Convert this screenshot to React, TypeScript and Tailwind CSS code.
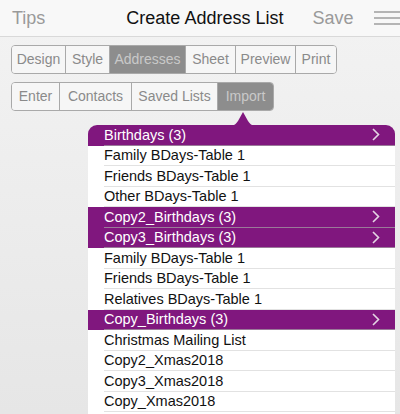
import React from 'react';

const tabsTop: [string, number][] = [
  ['Design', 53],
  ['Style', 44],
  ['Addresses', 76],
  ['Sheet', 50],
  ['Preview', 60],
  ['Print', 41],
];
const tabsBottom: [string, number][] = [
  ['Enter', 47],
  ['Contacts', 72],
  ['Saved Lists', 86],
  ['Import', 56],
];

type Row = { label: string; group?: boolean };

const rows: Row[] = [
  { label: 'Birthdays (3)', group: true },
  { label: 'Family BDays-Table 1' },
  { label: 'Friends BDays-Table 1' },
  { label: 'Other BDays-Table 1' },
  { label: 'Copy2_Birthdays (3)', group: true },
  { label: 'Copy3_Birthdays (3)', group: true },
  { label: 'Family BDays-Table 1' },
  { label: 'Friends BDays-Table 1' },
  { label: 'Relatives BDays-Table 1' },
  { label: 'Copy_Birthdays (3)', group: true },
  { label: 'Christmas Mailing List' },
  { label: 'Copy2_Xmas2018' },
  { label: 'Copy3_Xmas2018' },
  { label: 'Copy_Xmas2018' },
  { label: '' },
];

function Segmented({ items, active }: { items: [string, number][]; active: string }) {
  return (
    <div className="flex h-[29px] w-fit overflow-hidden rounded-[4px] border border-[#a9a9a9]">
      {items.map(([item, w], i) => (
        <div
          key={item}
          style={{ width: w }}
          className={
            'flex items-center justify-center text-[14px] ' +
            (i > 0 ? 'border-l border-[#a9a9a9] ' : '') +
            (item === active ? 'bg-[#8d8d8d] text-[#c9c9c9]' : 'bg-[#f6f6f6] text-[#8a8a8a]')
          }>
          {item}
        </div>
      ))}
    </div>
  );
}

function Chevron() {
  return (
    <svg width="8" height="13" viewBox="0 0 8 13" className="shrink-0">
      <path d="M1 1 L6.5 6.5 L1 12" fill="none" stroke="#e4d6e4" strokeWidth="1.6" />
    </svg>
  );
}

function ListRow({ row, first }: { row: Row; first: boolean }) {
  if (row.group) {
    return (
      <div className={'h-[20.5px] bg-[#80177e] pl-[16px] ' + (first ? 'rounded-t-[9px]' : '')}>
        <div className="flex h-full items-center justify-between border-b border-[#9a7a99] pr-[15px] text-[14.5px] leading-none text-white">
          <span>{row.label}</span>
          <Chevron />
        </div>
      </div>
    );
  }
  return (
    <div className="h-[20.5px] bg-white pl-[16px]">
      <div className="flex h-full items-center border-b border-[#e2e2e2] text-[14.5px] leading-none text-[#111]">
        {row.label}
      </div>
    </div>
  );
}

export default function App() {
  return (
    <div
      className="h-[414px] w-[400px] overflow-hidden bg-gradient-to-b from-[#f3f3f3] to-[#e6e6e6]"
      style={{ fontFamily: '"Liberation Sans", Arial, sans-serif' }}>
      <header className="flex h-[37px] items-center border-b border-[#d9d9d9] bg-[#f8f8f8] pl-[12px]">
        <span className="text-[18px] text-[#9a9a9a]">Tips</span>
        <span className="ml-[81px] text-[18px] text-[#111]">Create Address List</span>
        <span className="ml-[29px] text-[18px] text-[#9a9a9a]">Save</span>
        <div className="ml-auto flex w-[26px] flex-col gap-[4px]">
          <div className="h-[2px] bg-[#b5b5b5]" />
          <div className="h-[2px] bg-[#b5b5b5]" />
          <div className="h-[2px] bg-[#b5b5b5]" />
        </div>
      </header>

      <div className="flex flex-col gap-[8px] pl-[11px] pt-[8px]">
        <Segmented items={tabsTop} active="Addresses" />
        <Segmented items={tabsBottom} active="Import" />
      </div>

      <div className="relative ml-[88px] mr-[5px] mt-[14px]">
        <svg
          width="30"
          height="15"
          viewBox="0 0 30 15"
          className="absolute left-[140px] top-[-14px]">
          <path d="M0 15 C6 15 8 13 10 10 L15 1 L20 10 C22 13 24 15 30 15 Z" fill="#80177e" />
        </svg>
        {rows.map((row, i) => (
          <ListRow key={i} row={row} first={i === 0} />
        ))}
      </div>
    </div>
  );
}
